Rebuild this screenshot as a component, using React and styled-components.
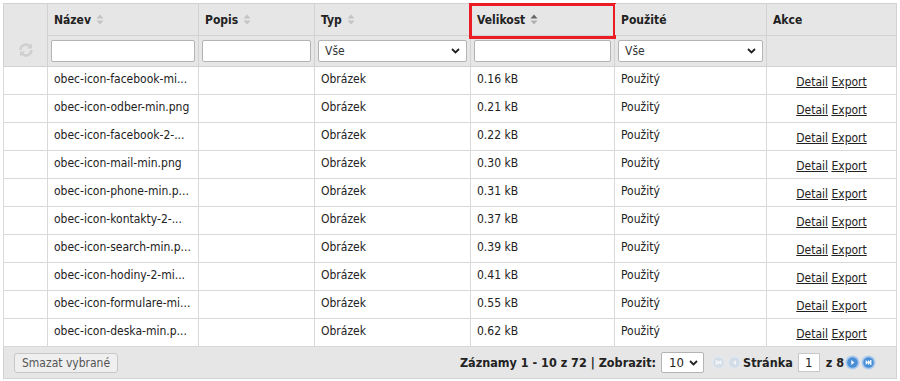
import React from "react";
import styled, { createGlobalStyle } from "styled-components";

const Global = createGlobalStyle`
  html, body { margin: 0; padding: 0; background: #fff; }
  body { font-family: "DejaVu Sans Condensed", "DejaVu Sans", Verdana, sans-serif; font-size: 12px; color: #222; }
`;

const Wrap = styled.div`
  padding: 3px 4px 3px 3px;
`;

const Table = styled.table`
  border-collapse: collapse;
  table-layout: fixed;
  width: 893px;
  border: 1px solid #cfcfcf;
`;

const HeadCell = styled.th`
  position: relative;
  height: 32px;
  padding: 0 6px;
  background: #e6e6e6;
  border: 1px solid #d2d2d2;
  text-align: left;
  font-weight: bold;
  font-size: 12px;
  vertical-align: middle;
  white-space: nowrap;
  box-sizing: border-box;
`;

const CornerCell = styled(HeadCell)`
  text-align: center;
  padding-top: 32px;
`;

const Highlight = styled.div`
  position: absolute;
  left: -2px;
  top: -1px;
  right: -2px;
  bottom: -4px;
  border: 3px solid #ec1c24;
  pointer-events: none;
`;

const FilterCell = styled.td`
  height: 31px;
  padding: 0 3px;
  background: #e6e6e6;
  border: 1px solid #d2d2d2;
  vertical-align: middle;
  box-sizing: border-box;
`;

const TextInput = styled.input`
  box-sizing: border-box;
  width: 100%;
  height: 22px;
  border: 1px solid #b4b4b4;
  border-radius: 2px;
  background: #fff;
  margin: 0;
  display: block;
`;

const SelectBox = styled.div`
  box-sizing: border-box;
  width: 100%;
  height: 22px;
  border: 1px solid #b4b4b4;
  border-radius: 2px;
  background: #fff;
  display: flex;
  align-items: center;
  justify-content: space-between;
  padding: 0 6px 0 6px;
  font-size: 12px;
  color: #333;
`;

const Cell = styled.td`
  box-sizing: border-box;
  height: 28px;
  padding: 4px 6px 0;
  border: 1px solid #d9d9d9;
  vertical-align: top;
  white-space: nowrap;
  overflow: hidden;
  line-height: 16px;
`;

const ActionCell = styled(Cell)`
  text-align: center;
  vertical-align: middle;
  padding: 2px 6px 0;
`;

const Link = styled.a`
  color: #222;
  text-decoration: underline;
`;

const FootCell = styled.td`
  box-sizing: border-box;
  height: 32px;
  background: #e6e6e6;
  border: 1px solid #d2d2d2;
  padding: 0 10px;
`;

const Footer = styled.div`
  display: flex;
  align-items: center;
  justify-content: space-between;
`;

const Button = styled.button`
  font-family: inherit;
  font-size: 12px;
  color: #555;
  background: #efefef;
  border: 1px solid #c8c8c8;
  border-radius: 3px;
  height: 20px;
  padding: 0 7px;
`;

const Pager = styled.div`
  display: flex;
  align-items: center;
  gap: 1px;
  font-weight: bold;
  font-size: 12.5px;
  color: #222;
  padding-right: 10px;
`;

const SmallSelect = styled.div`
  box-sizing: border-box;
  width: 43px;
  height: 21px;
  border: 1px solid #b4b4b4;
  border-radius: 2px;
  background: #fff;
  display: flex;
  align-items: center;
  justify-content: space-between;
  padding: 0 5px 0 7px;
  font-weight: normal;
  font-size: 13px;
  margin: 0 6px 0 4px;
`;

const PageInput = styled.div`
  box-sizing: border-box;
  width: 22px;
  height: 19px;
  border: 1px solid #c8c8c8;
  background: #fff;
  display: flex;
  align-items: center;
  justify-content: center;
  font-weight: normal;
  font-size: 13px;
  margin: 0 5px 0 4px;
`;

const Chevron = () => (
  <svg width="9" height="6" viewBox="0 0 9 6">
    <path d="M1 1l3.5 3.5L8 1" fill="none" stroke="#222" strokeWidth="1.8" />
  </svg>
);

const Sort = ({ active }) => (
  <svg width="8" height="11" viewBox="0 0 8 11" style={{ marginLeft: 5, verticalAlign: -1 }}>
    <path d="M4 0.5L7.5 4.5H0.5z" fill={active ? "#666" : "#c4c4c4"} />
    <path d="M4 10.5L7.5 6.5H0.5z" fill={active ? "#b0b0b0" : "#c4c4c4"} />
  </svg>
);

const Refresh = () => (
  <svg width="16" height="16" viewBox="0 0 16 16">
    <g fill="none" stroke="#cfcfcf" strokeWidth="2.4">
      <path d="M2.5 8a5.5 5.5 0 0 1 9.6-3.6" />
      <path d="M13.5 8a5.5 5.5 0 0 1-9.6 3.6" />
    </g>
    <path d="M14 1.5v5h-5z" fill="#cfcfcf" />
    <path d="M2 14.5v-5h5z" fill="#cfcfcf" />
  </svg>
);

const NavIcon = ({ kind, on }) => {
  const fill = on ? "#4a8fd6" : "#d3dde8";
  const ring = on ? "#a9c9ee" : "#e3e8ee";
  const glyph = on ? "#fff" : "#f4f6f8";
  return (
    <svg width="15" height="15" viewBox="0 0 15 15">
      <circle cx="7.5" cy="7.5" r="7" fill={ring} />
      <circle cx="7.5" cy="7.5" r="5.3" fill={fill} />
      {kind === "first" && (
        <g fill={glyph}>
          <rect x="4.6" y="5" width="1.3" height="5" />
          <path d="M10.3 5v5L7.6 7.5z" />
          <path d="M8 5v5L5.3 7.5z" />
        </g>
      )}
      {kind === "prev" && <path d="M9 5v5L6 7.5z" fill={glyph} />}
      {kind === "next" && <path d="M6.3 5v5l3-2.5z" fill={glyph} />}
      {kind === "last" && (
        <g fill={glyph}>
          <path d="M4.7 5v5l2.7-2.5z" />
          <path d="M7 5v5l2.7-2.5z" />
          <rect x="9.1" y="5" width="1.3" height="5" />
        </g>
      )}
    </svg>
  );
};

const rows = [
  ["obec-icon-facebook-mi...", "0.16 kB"],
  ["obec-icon-odber-min.png", "0.21 kB"],
  ["obec-icon-facebook-2-...", "0.22 kB"],
  ["obec-icon-mail-min.png", "0.30 kB"],
  ["obec-icon-phone-min.p...", "0.31 kB"],
  ["obec-icon-kontakty-2-...", "0.37 kB"],
  ["obec-icon-search-min.p...", "0.39 kB"],
  ["obec-icon-hodiny-2-mi...", "0.41 kB"],
  ["obec-icon-formulare-mi...", "0.55 kB"],
  ["obec-icon-deska-min.p...", "0.62 kB"],
];

const widths = [44, 151, 116, 156, 144, 152, 130];

export default function App() {
  return (
    <Wrap>
      <Global />
      <Table>
        <colgroup>
          {widths.map((w, i) => (
            <col key={i} style={{ width: w }} />
          ))}
        </colgroup>
        <thead>
          <tr>
            <CornerCell rowSpan={2}>
              <Refresh />
            </CornerCell>
            <HeadCell>Název<Sort /></HeadCell>
            <HeadCell>Popis<Sort /></HeadCell>
            <HeadCell>Typ<Sort /></HeadCell>
            <HeadCell>
              Velikost<Sort active />
              <Highlight />
            </HeadCell>
            <HeadCell>Použité</HeadCell>
            <HeadCell>Akce</HeadCell>
          </tr>
          <tr>
            <FilterCell><TextInput /></FilterCell>
            <FilterCell><TextInput /></FilterCell>
            <FilterCell><SelectBox>Vše<Chevron /></SelectBox></FilterCell>
            <FilterCell><TextInput /></FilterCell>
            <FilterCell><SelectBox>Vše<Chevron /></SelectBox></FilterCell>
            <FilterCell />
          </tr>
        </thead>
        <tbody>
          {rows.map(([name, size]) => (
            <tr key={name}>
              <Cell />
              <Cell>{name}</Cell>
              <Cell />
              <Cell>Obrázek</Cell>
              <Cell>{size}</Cell>
              <Cell>Použitý</Cell>
              <ActionCell>
                <Link href="#">Detail</Link> <Link href="#">Export</Link>
              </ActionCell>
            </tr>
          ))}
        </tbody>
        <tfoot>
          <tr>
            <FootCell colSpan={7}>
              <Footer>
                <Button>Smazat vybrané</Button>
                <Pager>
                  <span>Záznamy 1 - 10 z 72 | Zobrazit:</span>
                  <SmallSelect>10<Chevron /></SmallSelect>
                  <NavIcon kind="first" />
                  <NavIcon kind="prev" />
                  <span>Stránka</span>
                  <PageInput>1</PageInput>
                  <span>z 8</span>
                  <NavIcon kind="next" on />
                  <NavIcon kind="last" on />
                </Pager>
              </Footer>
            </FootCell>
          </tr>
        </tfoot>
      </Table>
    </Wrap>
  );
}
